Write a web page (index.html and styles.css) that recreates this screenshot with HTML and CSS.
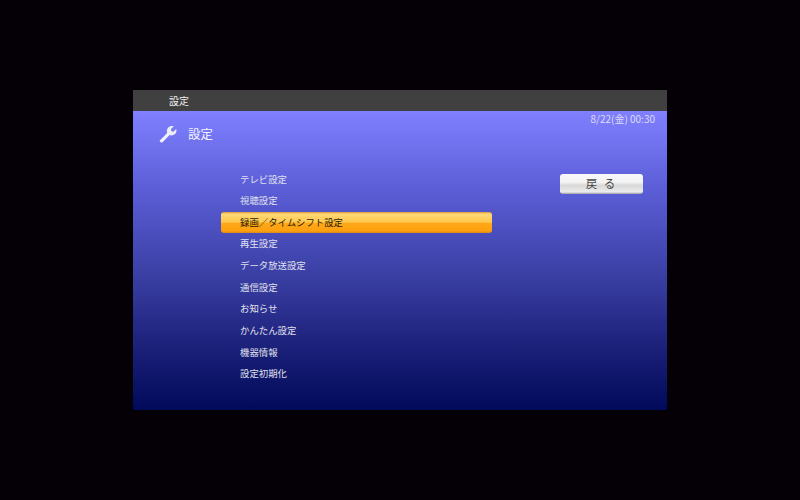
FILE: index.html
```html
<!DOCTYPE html>
<html lang="ja">
<head>
    <meta charset="UTF-8">
    <title>設定</title>
    <link rel="stylesheet" href="styles.css">
</head>
<body>
    <div class="screen">
        <div class="title-bar">設定</div>
        <div class="content">
            <div class="head-row">
                <div class="page-title">
                    <svg class="wrench" width="18" height="18" viewBox="0 0 18 18">
                        <path d="M1 15.2 L8.2 8 C7.4 5.6 8 3.6 9.6 2.2 C11.2 0.9 13.2 0.7 14.8 1.3 L11.9 4.1 L12.4 6.2 L14.5 6.7 L17.2 3.9 C17.8 5.6 17.4 7.7 16 9 C14.6 10.4 12.6 10.8 10.6 10.1 L3.6 17.2 C3 17.8 2 17.7 1.4 17.1 L1 16.7 C0.5 16.2 0.5 15.7 1 15.2 Z" fill="#eef0f8"/>
                    </svg>
                    <span>設定</span>
                </div>
                <div class="clock">8/22(金) 00:30</div>
            </div>
            <div class="body-row">
                <ul class="menu">
                    <li>テレビ設定</li>
                    <li>視聴設定</li>
                    <li class="selected">録画／タイムシフト設定</li>
                    <li>再生設定</li>
                    <li>データ放送設定</li>
                    <li>通信設定</li>
                    <li>お知らせ</li>
                    <li>かんたん設定</li>
                    <li>機器情報</li>
                    <li>設定初期化</li>
                </ul>
                <div class="back-button">戻 る</div>
            </div>
        </div>
    </div>
</body>
</html>
```

FILE: styles.css
```css
html, body {
    margin: 0;
    height: 100%;
}
body {
    background: #040006;
    font-family: "Noto Sans CJK JP", "Liberation Sans", sans-serif;
    display: flex;
    flex-direction: column;
    align-items: flex-start;
    padding: 90px 0 0 133px;
    box-sizing: border-box;
}
.screen {
    width: 534px;
    height: 320px;
    display: flex;
    flex-direction: column;
}
.title-bar {
    height: 21px;
    flex: none;
    background: #404040;
    color: #f0f0f0;
    font-size: 10px;
    line-height: 22px;
    padding-left: 36px;
}
.content {
    flex: 1;
    background: linear-gradient(#8080ff 0%, #5c5fd8 25%, #3a3fa4 55%, #1a1f78 80%, #000a5a 100%);
    display: flex;
    flex-direction: column;
}
.head-row {
    display: flex;
    justify-content: space-between;
    align-items: flex-start;
    height: 57.5px;
    padding: 0 12px 0 25.5px;
}
.page-title {
    display: flex;
    align-items: center;
    gap: 11.5px;
    margin-top: 14px;
    color: #f4f4ff;
    font-size: 12.5px;
    line-height: 18px;
}
.clock {
    margin-top: 1px;
    color: #dcdcf4;
    font-size: 10px;
    line-height: 14px;
}
.body-row {
    display: flex;
    align-items: flex-start;
    padding-left: 88px;
}
.menu {
    list-style: none;
    margin: 0;
    padding: 0;
    width: 271px;
    display: flex;
    flex-direction: column;
}
.menu li {
    height: 21.67px;
    line-height: 21.67px;
    padding-left: 19px;
    color: #e0e0ec;
    font-size: 9.4px;
}
.menu li.selected {
    color: #2a1c00;
    border-radius: 3px;
    background: linear-gradient(#d89a38 0%, #ffd878 10%, #ffc84c 48%, #ffa818 55%, #ffa010 90%, #d88a18 100%);
}
.back-button {
    width: 83px;
    height: 20px;
    margin: 5px 0 0 68px;
    border-radius: 3px;
    background: linear-gradient(#f8f8f8 0%, #f4f4f4 40%, #d8d8d8 58%, #ececec 90%, #9a9aa4 100%);
    color: #484848;
    font-size: 11.5px;
    letter-spacing: 2px;
    line-height: 19px;
    text-align: center;
}
```
